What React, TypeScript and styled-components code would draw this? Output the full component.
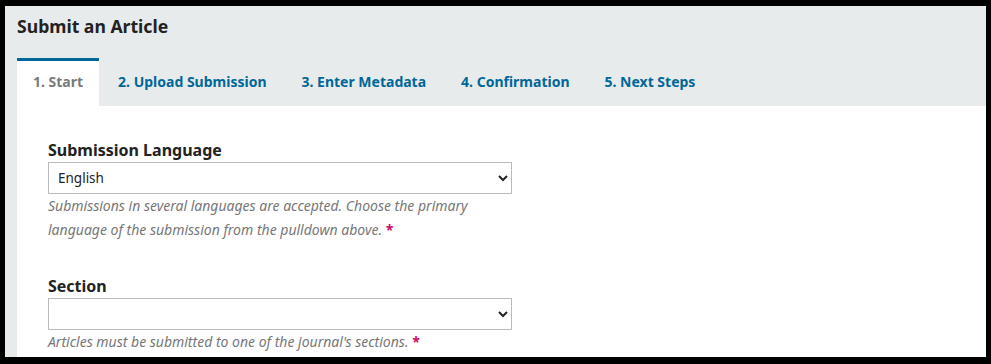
import React from 'react';
import styled, { createGlobalStyle } from 'styled-components';

const GlobalStyle = createGlobalStyle`
  html, body {
    margin: 0;
    padding: 0;
    background: #000;
    height: 364px;
    overflow: hidden;
  }
  body {
    font-family: "Noto Sans", "Open Sans", sans-serif;
  }
`;

const tabs = [
  { label: '1. Start', active: true },
  { label: '2. Upload Submission' },
  { label: '3. Enter Metadata' },
  { label: '4. Confirmation' },
  { label: '5. Next Steps' },
];

export default function App() {
  return (
    <>
      <GlobalStyle />
      <Frame>
        <PageTitle>Submit an Article</PageTitle>
        <TabList>
          {tabs.map((tab) => (
            <Tab key={tab.label} $active={!!tab.active}>
              {tab.label}
            </Tab>
          ))}
        </TabList>
        <Panel>
          <Field>
            <Label>Submission Language</Label>
            <Select defaultValue="en">
              <option value="en">English</option>
            </Select>
            <Help>
              Submissions in several languages are accepted. Choose the primary
              language of the submission from the pulldown above. <Req>*</Req>
            </Help>
          </Field>
          <Field>
            <Label>Section</Label>
            <Select defaultValue="">
              <option value=""></option>
            </Select>
            <Help>
              Articles must be submitted to one of the journal's sections.{' '}
              <Req>*</Req>
            </Help>
          </Field>
        </Panel>
      </Frame>
    </>
  );
}

const Frame = styled.div`
  margin: 6px 5px 0 5px;
  height: 351px;
  background: #e8ebeb;
  padding-left: 12px;
  display: flex;
  flex-direction: column;
  overflow: hidden;
`;

const PageTitle = styled.h1`
  margin: 0;
  padding: 8px 0 0;
  height: 52px;
  flex-shrink: 0;
  box-sizing: border-box;
  font-size: 17.6px;
  font-weight: 700;
  color: #222;
  line-height: 24px;
`;

const TabList = styled.div`
  display: flex;
  gap: 3px;
  height: 48px;
  flex-shrink: 0;
`;

const Tab = styled.div<{ $active: boolean }>`
  padding: 0 16px 4px;
  display: flex;
  align-items: center;
  font-size: 14px;
  font-weight: 700;
  color: ${(p) => (p.$active ? '#7a7a7a' : '#006798')};
  background: ${(p) => (p.$active ? '#fff' : 'transparent')};
  border-top: 3px solid ${(p) => (p.$active ? '#006798' : 'transparent')};
  box-sizing: border-box;
`;

const Panel = styled.div`
  flex: 1;
  background: #fff;
  padding: 33px 0 0 31px;
  display: flex;
  flex-direction: column;
  gap: 33px;
`;

const Field = styled.div`
  display: flex;
  flex-direction: column;
  width: 464px;
`;

const Label = styled.label`
  font-size: 16px;
  font-weight: 700;
  color: #222;
  line-height: 22px;
  margin-bottom: 1px;
`;

const Select = styled.select`
  height: 32px;
  width: 464px;
  box-sizing: border-box;
  border: 1px solid #bbb;
  border-radius: 0;
  background: #fff;
  font-family: "Noto Sans", sans-serif;
  font-size: 13.5px;
  color: #222;
  padding: 0 5px;
`;

const Help = styled.div`
  font-size: 14px;
  font-style: italic;
  color: #777;
  line-height: 24px;
`;

const Req = styled.span`
  color: #d00a6c;
  font-style: normal;
  font-weight: 700;
`;
